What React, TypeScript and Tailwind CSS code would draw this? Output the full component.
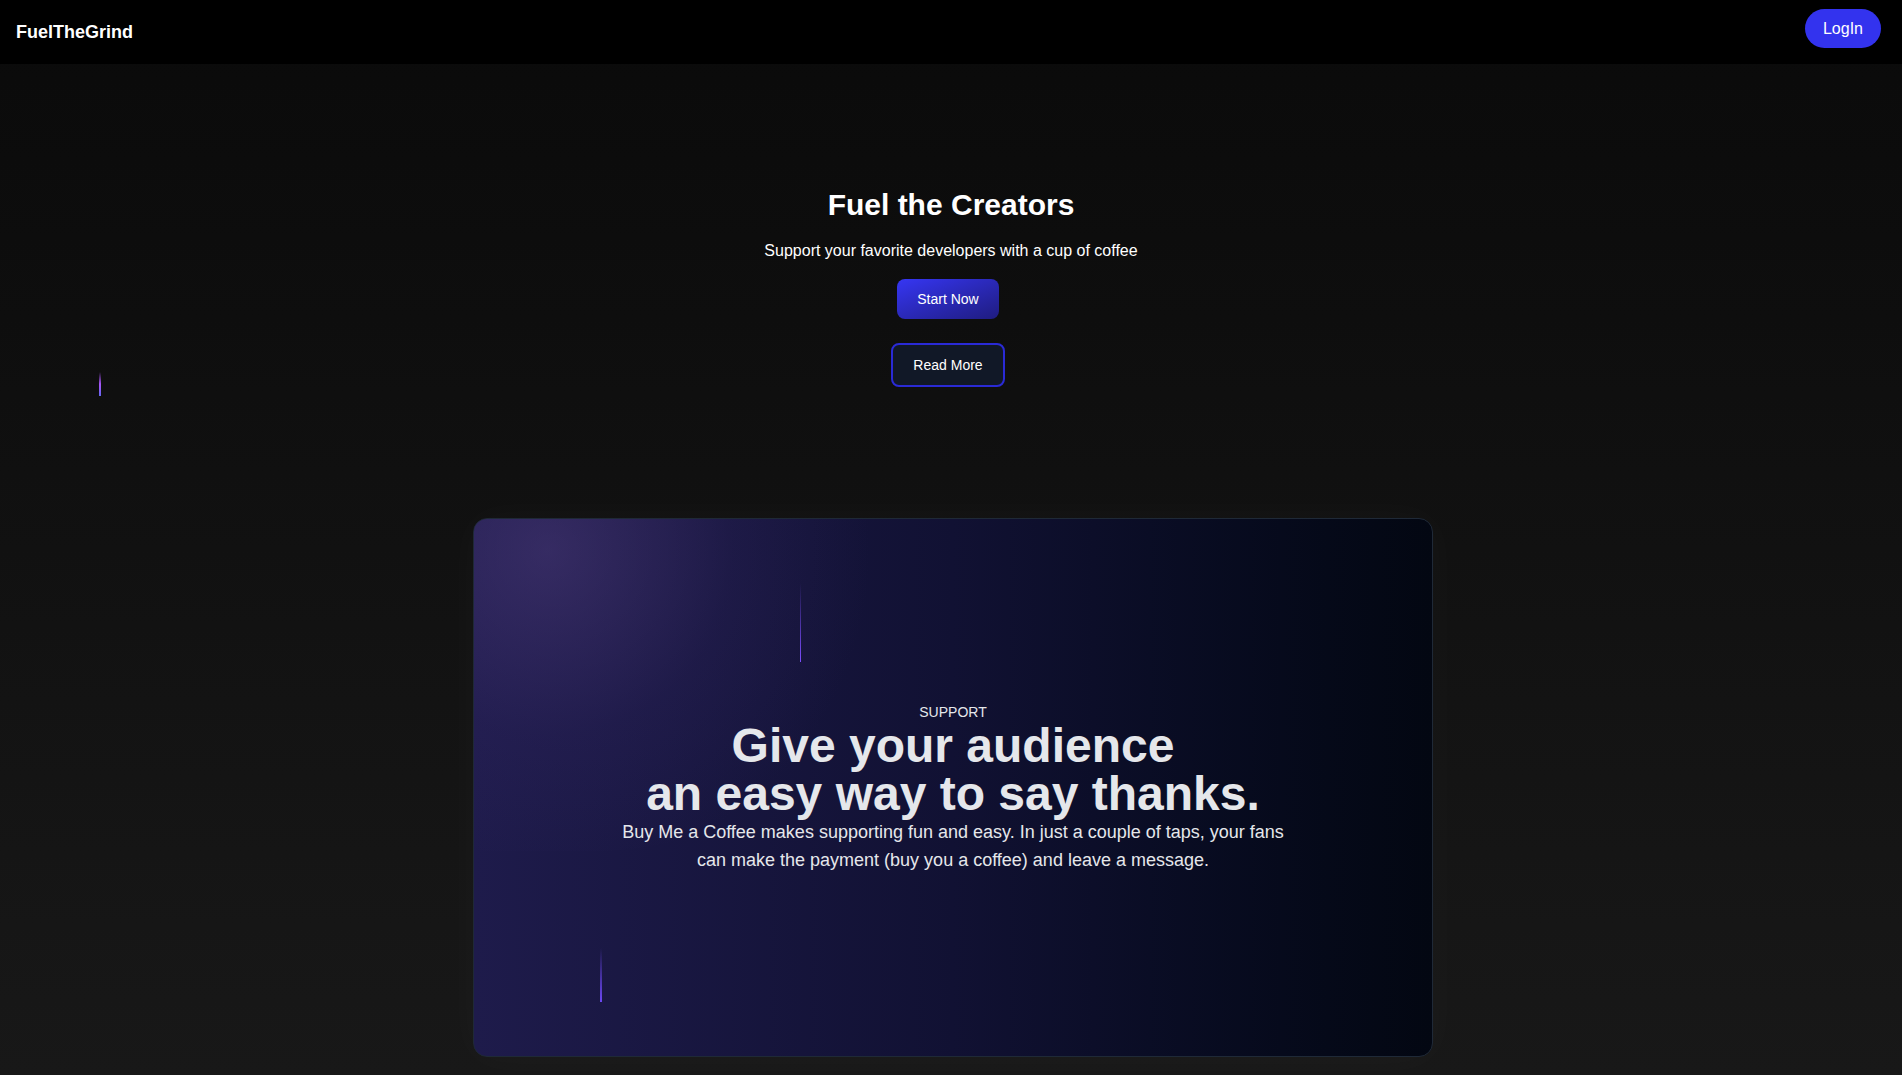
export default function App() {
  return (
    <div className="min-h-screen bg-gradient-to-b from-[#0a0a0a] to-[#181818] font-['Liberation_Sans',Arial,sans-serif] text-white">
      {/* navbar */}
      <nav className="flex h-16 items-center justify-between bg-black pl-4">
        <span className="text-lg font-bold">FuelTheGrind</span>
        <button className="mr-[21px] mb-4 self-end rounded-full bg-[#3333ee] px-[18px] py-[7.5px] text-base text-white">
          LogIn
        </button>
      </nav>

      {/* hero */}
      <section className="relative flex flex-col items-center pt-[123px]">
        <div className="absolute top-[308px] left-[99px] h-6 w-[2px] bg-gradient-to-b from-transparent via-[#a855f7] to-[#6366f1]" />
        <h1 className="text-3xl font-bold">Fuel the Creators</h1>
        <p className="mt-4 text-base">Support your favorite developers with a cup of coffee</p>
        <button className="mt-4 mr-[6px] rounded-lg bg-gradient-to-br from-[#3636f4] to-[#1f1c80] px-5 py-2.5 text-sm text-white">
          Start Now
        </button>
        <button className="mt-6 mr-[6px] rounded-lg border-2 border-[#2a2ad6] bg-[#111827] px-5 py-2.5 text-sm text-white">
          Read More
        </button>
      </section>

      {/* support card */}
      <section className="flex justify-center pt-[131px] pb-[18px] pl-[4px]">
        <div className="relative flex h-[539px] w-[960px] flex-col items-center justify-center overflow-hidden rounded-[14px] border border-[#1f2937] bg-gradient-to-r from-[#1e1b4b] via-[#111133] to-[#030712] shadow-[0_0_40px_rgba(255,255,255,0.03)]">
          <div className="absolute -top-[268px] -left-[276px] h-[600px] w-[700px] rounded-full bg-[radial-gradient(circle,rgba(92,70,140,0.4)_0%,rgba(60,45,110,0.18)_40%,transparent_70%)]" />
          <div className="absolute top-[64px] left-[326px] h-[79px] w-px bg-gradient-to-b from-transparent to-[#7c4dff]" />
          <div className="absolute top-[429px] left-[126px] h-[54px] w-[1.5px] bg-gradient-to-b from-transparent to-[#6d48f5]" />

          <div className="relative flex flex-col items-center text-center text-gray-200">
            <p className="text-sm">SUPPORT</p>
            <h2 className="text-5xl leading-[48px] font-bold">
              Give your audience
              <br />
              an easy way to say thanks.
            </h2>
            <p className="max-w-2xl text-lg leading-7">
              Buy Me a Coffee makes supporting fun and easy. In just a couple of taps, your fans can make the payment
              (buy you a coffee) and leave a message.
            </p>
          </div>
        </div>
      </section>
    </div>
  );
}
